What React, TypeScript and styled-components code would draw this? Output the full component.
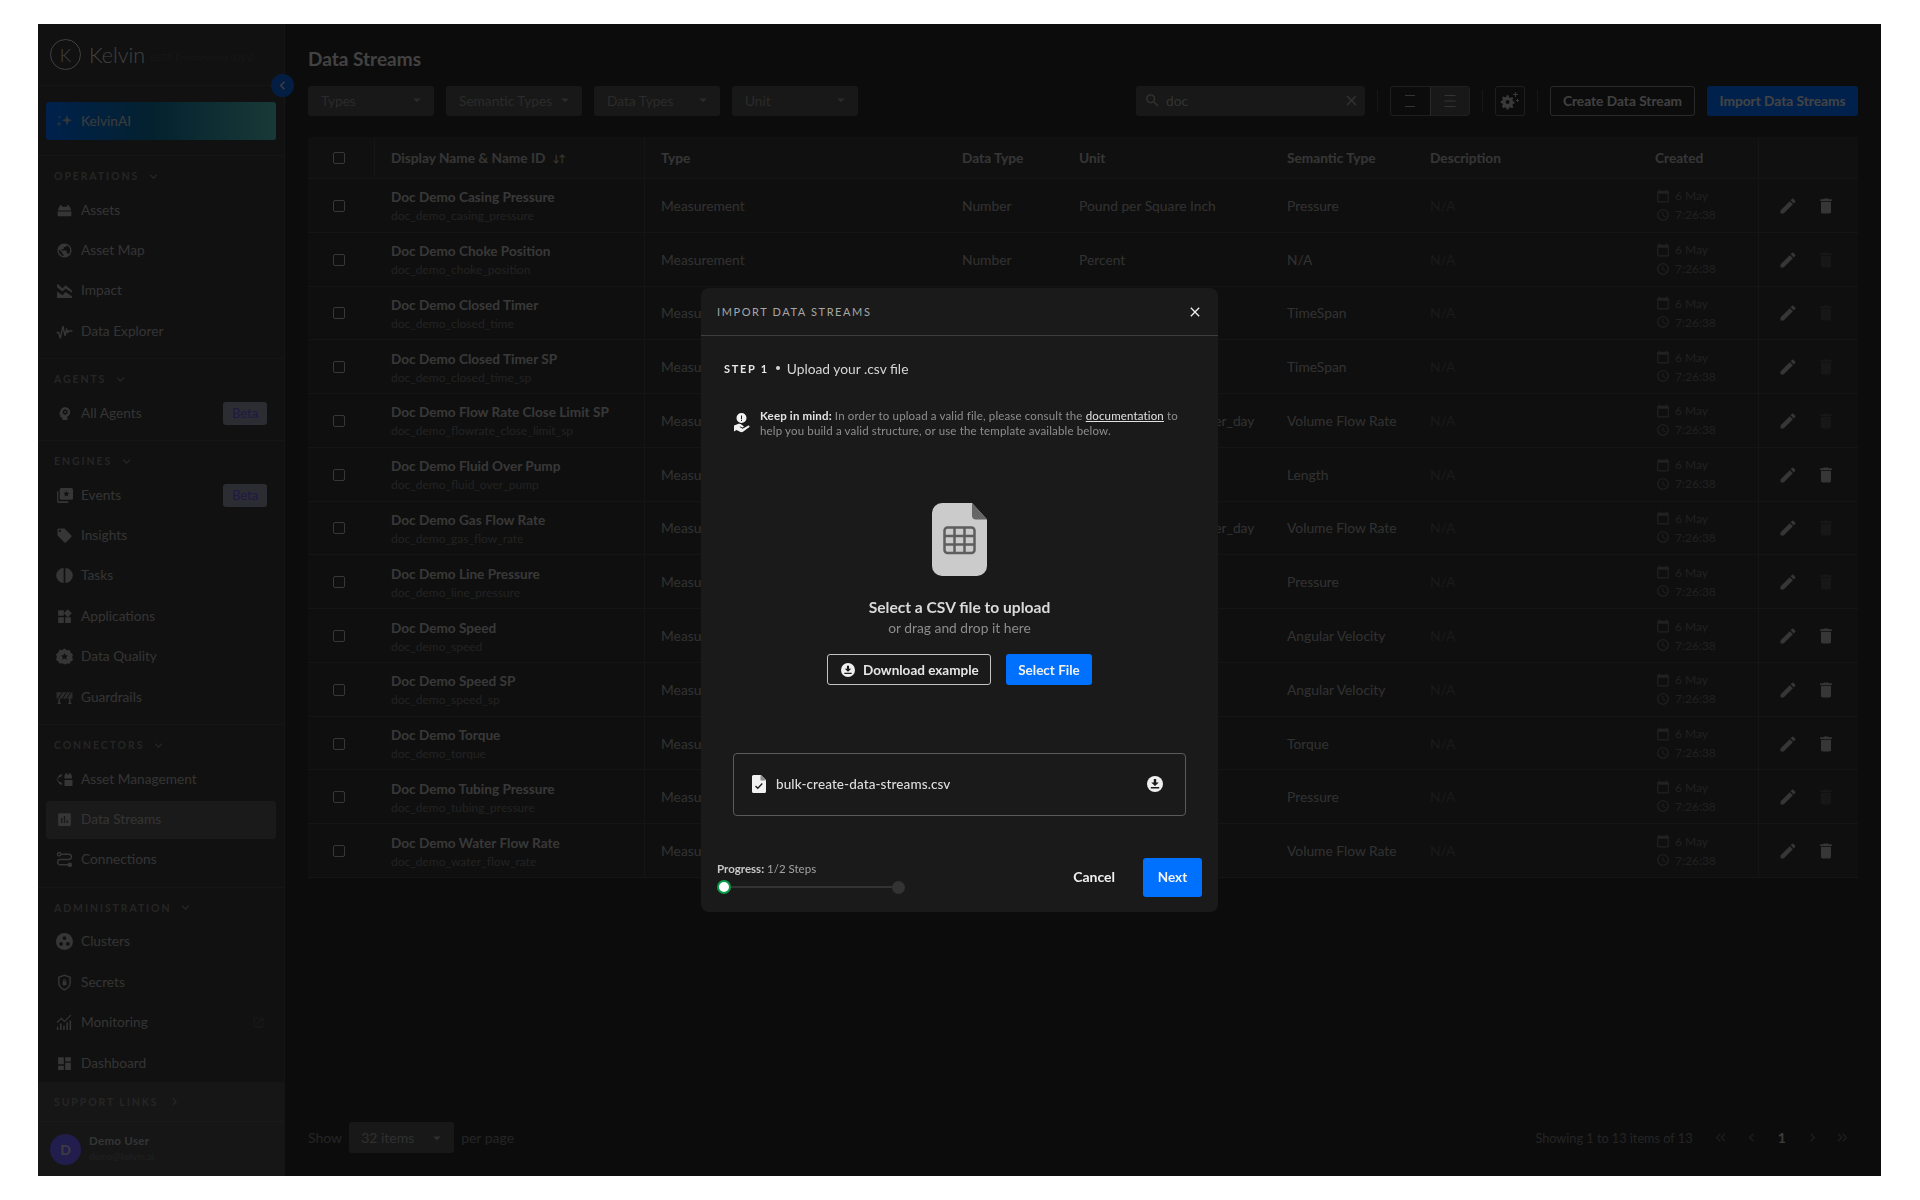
import React from "react";
import styled, { createGlobalStyle } from "styled-components";
import {
  MdAccessTime,
  MdArrowDropDown,
  MdAssessment,
  MdCalendarToday,
  MdChevronLeft,
  MdChevronRight,
  MdClose,
  MdDashboard,
  MdDelete,
  MdEdit,
  MdKeyboardArrowDown,
  MdKeyboardDoubleArrowLeft,
  MdKeyboardDoubleArrowRight,
  MdLocalOffer,
  MdOpenInNew,
  MdPsychology,
  MdPublic,
  MdSearch,
  MdWidgets,
} from "react-icons/md";

const GlobalStyle = createGlobalStyle`
  html, body {
    margin: 0;
    background: #ffffff;
    font-family: "Lato", "Liberation Sans", sans-serif;
  }
  * { box-sizing: border-box; }
`;

const Page = styled.div`
  height: 1200px;
  padding: 24px 39px 24px 38px;
`;

const AppFrame = styled.div`
  position: relative;
  display: flex;
  height: 1152px;
  overflow: hidden;
  background: #2a2a2a;
`;

/* sidebar */
const Sidebar = styled.aside`
  width: 247px;
  flex: none;
  display: flex;
  flex-direction: column;
  background: #393939;
  border-right: 1px solid #4a4a4a;
`;

const Brand = styled.div`
  height: 62px;
  flex: none;
  display: flex;
  align-items: center;
  padding-left: 12px;
  border-bottom: 1px solid #4a4a4a;
`;

const BrandMark = styled.div`
  width: 31px;
  height: 31px;
  border-radius: 50%;
  border: 1px solid #d8d8d8;
  display: flex;
  align-items: center;
  justify-content: center;
  color: #d8d8d8;
  font-size: 18px;
  font-weight: 300;
`;

const BrandName = styled.span`
  margin-left: 8px;
  color: #d8d8d8;
  font-size: 21.5px;
  font-weight: 300;
`;

const BrandEnv = styled.span`
  margin-left: 5px;
  margin-top: 6px;
  color: #4c4c4c;
  font-size: 9.5px;
`;

const AiBlock = styled.div`
  flex: none;
  padding: 16px 8px 15px;
  border-bottom: 1px solid #4a4a4a;
`;

const AiButton = styled.div`
  height: 38px;
  padding: 0 0 2px 10px;
  border-radius: 3px;
  display: flex;
  align-items: center;
  gap: 8px;
  font-size: 13.7px;
  color: #c8c8c8;
  background: linear-gradient(90deg, #0070ff 0%, #0e6f9e 45%, #52c0b8 100%);
`;

const NavScroll = styled.div`
  flex: 1;
  min-height: 0;
  overflow: hidden;
`;

const NavSection = styled.section`
  padding: 11px 8px 8px;
  border-bottom: 1px solid #4a4a4a;
  &:last-child {
    border-bottom: none;
    padding-bottom: 0;
  }
`;

const SectionLabel = styled.div`
  height: 18px;
  margin: 0 0 6px;
  padding-left: 8px;
  display: flex;
  align-items: center;
  gap: 7px;
  font-size: 10.5px;
  font-weight: 700;
  letter-spacing: 1.9px;
  color: #7e7e7e;
  svg {
    font-size: 15px;
  }
`;

const NavLabelText = styled.span`
  flex: 1;
  padding-bottom: 2px;
`;

const NavItem = styled.div<{ $active?: boolean }>`
  height: 38px;
  margin-bottom: 2.4px;
  padding: 0 9px 0 10px;
  display: flex;
  align-items: center;
  gap: 8px;
  border-radius: 3px;
  font-size: 13.7px;
  color: #aeaeae;
  background: ${(p) => (p.$active ? "#575757" : "transparent")};
  &:last-child {
    margin-bottom: 0;
  }
`;

const NavIcon = styled.span`
  width: 17px;
  height: 17px;
  flex: none;
  display: flex;
  align-items: center;
  justify-content: center;
  color: #b4b4b4;
  svg {
    width: 17px;
    height: 17px;
  }
`;

const BetaBadge = styled.span`
  width: 44px;
  height: 23px;
  border-radius: 3px;
  display: flex;
  align-items: center;
  justify-content: center;
  font-size: 13px;
  color: #6a52e0;
  background: #9494ac;
`;

const SideLink = styled.span`
  margin-right: 2px;
  color: #555;
  font-size: 13px;
  display: flex;
`;

const SupportBar = styled.div`
  flex: none;
  height: 40px;
  padding-left: 16px;
  display: flex;
  align-items: center;
  gap: 9px;
  background: #4a4a4a;
  border-bottom: 1px solid #585858;
  font-size: 10.5px;
  font-weight: 700;
  letter-spacing: 1.9px;
  color: #7e7e7e;
  svg {
    font-size: 15px;
  }
`;

const UserBar = styled.div`
  flex: 0 0 54px;
  padding-left: 12px;
  display: flex;
  align-items: center;
  gap: 8px;
  background: #4a4a4a;
`;

const Avatar = styled.div`
  width: 31px;
  height: 31px;
  border-radius: 50%;
  display: flex;
  align-items: center;
  justify-content: center;
  font-size: 14px;
  font-weight: 700;
  color: #c9c9e0;
  background: #7161ff;
`;

const UserName = styled.div`
  font-size: 11.5px;
  font-weight: 700;
  letter-spacing: 0.3px;
  color: #b0b0b0;
  line-height: 16px;
`;

const UserMail = styled.div`
  font-size: 9.5px;
  color: #6e6e6e;
  line-height: 16px;
`;

const CollapseBtn = styled.div`
  position: absolute;
  left: 233px;
  top: 50px;
  width: 23px;
  height: 23px;
  border-radius: 50%;
  display: flex;
  align-items: center;
  justify-content: center;
  color: #d0d0d0;
  font-size: 17px;
  background: #0a66dc;
`;

/* main content */
const Main = styled.main`
  flex: 1;
  min-width: 0;
  display: flex;
  flex-direction: column;
  padding: 23px;
`;

const Title = styled.h1`
  margin: 0;
  height: 24px;
  font-size: 19px;
  line-height: 24px;
  font-weight: 700;
  color: #dcdcdc;
`;

const Toolbar = styled.div`
  margin-top: 15px;
  height: 30px;
  display: flex;
  align-items: stretch;
`;

const FilterGroup = styled.div`
  display: flex;
  gap: 12px;
  flex: 1;
`;

const FilterSelect = styled.div<{ $w: number }>`
  width: ${(p) => p.$w}px;
  padding: 0 8px 2px 13px;
  display: flex;
  align-items: center;
  justify-content: space-between;
  border-radius: 3px;
  font-size: 13.7px;
  color: #8f8f8f;
  background: #505050;
  svg {
    font-size: 18px;
  }
`;

const SearchBox = styled.div`
  width: 229px;
  padding: 0 5px 2px 8px;
  display: flex;
  align-items: center;
  gap: 5px;
  border-radius: 3px;
  font-size: 13.7px;
  color: #a8a8a8;
  background: #505050;
  svg {
    font-size: 17px;
    flex: none;
  }
`;

const SearchText = styled.span`
  flex: 1;
`;

const ToolDivider = styled.div`
  width: 1px;
  margin: 4px 12px;
  background: #4e4e4e;
`;

const ToggleGroup = styled.div`
  display: flex;
  width: 80px;
  border: 1px solid #6a6a6a;
  border-radius: 3px;
  overflow: hidden;
`;

const ToggleButton = styled.div<{ $on?: boolean }>`
  flex: 1;
  display: flex;
  align-items: center;
  justify-content: center;
  color: #b0b0b0;
  background: ${(p) => (p.$on ? "#505050" : "transparent")};
  border-left: ${(p) => (p.$on ? "1px solid #8a8a8a" : "none")};
`;

const GearButton = styled.div`
  width: 30px;
  border: 1px solid #6a6a6a;
  border-radius: 3px;
  display: flex;
  align-items: center;
  justify-content: center;
  color: #c0c0c0;
`;

const OutlineAction = styled.div`
  width: 145px;
  margin-right: 12px;
  padding-bottom: 2px;
  border: 1px solid #8a8a8a;
  border-radius: 3px;
  display: flex;
  align-items: center;
  justify-content: center;
  font-size: 13.7px;
  font-weight: 700;
  color: #d8d8d8;
`;

const PrimaryAction = styled.div`
  width: 151px;
  padding-bottom: 2px;
  border-radius: 3px;
  display: flex;
  align-items: center;
  justify-content: center;
  font-size: 13.7px;
  font-weight: 700;
  color: #e0e0e0;
  background: #0070ff;
`;

/* table */
const columns = "67px 270px 301px 117px 208px 143px 225px 119px 100px";

const Table = styled.div`
  margin-top: 21px;
  background: #333333;
`;

const HeaderRow = styled.div`
  display: grid;
  grid-template-columns: ${columns};
  height: 42px;
  border-bottom: 1px solid #474747;
  background: #383838;
`;

const BodyRow = styled.div`
  display: grid;
  grid-template-columns: ${columns};
  height: 53.77px;
  border-bottom: 1px solid #474747;
`;

const Cell = styled.div<{ $divided?: boolean; $dim?: boolean }>`
  min-width: 0;
  padding-left: 16px;
  display: flex;
  align-items: center;
  font-size: 13.8px;
  white-space: nowrap;
  color: ${(p) => (p.$dim ? "#585858" : "#a6a6a6")};
  border-right: ${(p) => (p.$divided ? "1px solid #474747" : "none")};
`;

const HeadCell = styled(Cell)`
  font-weight: 700;
  font-size: 13.7px;
  color: #b4b4b4;
`;

const CheckCell = styled.div<{ $divided?: boolean }>`
  display: flex;
  align-items: center;
  justify-content: center;
  padding: 1px 5px 0 0;
  border-right: ${(p) => (p.$divided ? "1px solid #474747" : "none")};
`;

const CheckBox = styled.span`
  width: 12px;
  height: 12px;
  border: 1.5px solid #bcbcbc;
  border-radius: 2px;
`;

const NameCell = styled(Cell)`
  flex-direction: column;
  align-items: flex-start;
  justify-content: center;
  gap: 2px;
  padding-top: 2px;
`;

const StreamName = styled.div`
  font-size: 13.6px;
  line-height: 17px;
  font-weight: 700;
  color: #bdbdbd;
`;

const StreamId = styled.div`
  font-size: 12px;
  line-height: 15px;
  color: #747474;
`;

const SortMark = styled.span`
  margin-left: 7px;
  letter-spacing: -1.5px;
  font-size: 10px;
`;

const CreatedCell = styled.div`
  padding-left: 17px;
  display: flex;
  flex-direction: column;
  justify-content: center;
  gap: 4px;
`;

const CreatedLine = styled.div`
  display: flex;
  align-items: center;
  gap: 5px;
  font-size: 12px;
  line-height: 15px;
  color: #6e6e6e;
  svg {
    font-size: 14px;
  }
`;

const ActionCell = styled.div`
  padding: 1px 0 0 19px;
  display: flex;
  align-items: center;
  gap: 18px;
  border-left: 1px solid #474747;
`;

const ActionIcon = styled.span<{ $off?: boolean }>`
  display: flex;
  font-size: 20px;
  color: ${(p) => (p.$off ? "#4e4e4e" : "#b4b4b4")};
`;

/* footer */
const Footer = styled.div`
  margin-top: auto;
  height: 31px;
  display: flex;
  align-items: center;
  justify-content: space-between;
  font-size: 14px;
  color: #7a7a7a;
`;

const PageSize = styled.div`
  display: flex;
  align-items: center;
  gap: 7px;
`;

const SizeSelect = styled.div`
  width: 105px;
  height: 31px;
  padding: 0 8px 0 12px;
  display: flex;
  align-items: center;
  justify-content: space-between;
  border-radius: 3px;
  color: #a0a0a0;
  background: #505050;
  svg {
    font-size: 18px;
  }
`;

const Pager = styled.div`
  display: flex;
  align-items: center;
`;

const PagerInfo = styled.span`
  margin-right: 13px;
  font-size: 12.7px;
`;

const PagerButton = styled.span<{ $current?: boolean }>`
  width: 30.5px;
  display: flex;
  justify-content: center;
  font-size: ${(p) => (p.$current ? "14px" : "17px")};
  font-weight: ${(p) => (p.$current ? 700 : 400)};
  color: ${(p) => (p.$current ? "#c8c8c8" : "#606060")};
`;

/* modal */
const Overlay = styled.div`
  position: absolute;
  inset: 0;
  display: flex;
  align-items: center;
  justify-content: center;
  background: rgba(0, 0, 0, 0.7);
  backdrop-filter: blur(0.6px);
`;

const Modal = styled.div`
  width: 517px;
  height: 624px;
  display: flex;
  flex-direction: column;
  border-radius: 8px;
  background: #1a1a1a;
`;

const ModalHeader = styled.div`
  height: 48px;
  flex: none;
  padding: 0 15px 0 16px;
  display: flex;
  align-items: center;
  justify-content: space-between;
  border-bottom: 1px solid #3e3e3e;
  font-size: 11px;
  letter-spacing: 1.6px;
  color: #a6a6a6;
  svg {
    font-size: 16px;
    color: #ececec;
  }
`;

const ModalBody = styled.div`
  flex: 1;
  display: flex;
  flex-direction: column;
  padding: 0 16px 15px;
`;

const StepLine = styled.div`
  margin-top: 23px;
  padding-left: 7px;
  height: 18px;
  display: flex;
  align-items: center;
  gap: 7px;
  font-size: 13.8px;
  color: #d6d6d6;
`;

const StepTag = styled.span`
  font-size: 11px;
  font-weight: 700;
  letter-spacing: 1.7px;
  color: #e6e6e6;
`;

const StepDot = styled.span`
  width: 4px;
  height: 4px;
  border-radius: 50%;
  background: #d6d6d6;
`;

const Hint = styled.div`
  margin-top: 31px;
  padding-left: 16px;
  display: flex;
  align-items: center;
  gap: 10px;
`;

const HintText = styled.div`
  font-size: 11.5px;
  line-height: 15px;
  letter-spacing: 0.15px;
  color: #8e8e8e;
  b {
    color: #e2e2e2;
    font-weight: 700;
  }
  u {
    color: #e2e2e2;
  }
`;

const DropArea = styled.div`
  margin-top: 65px;
  display: flex;
  flex-direction: column;
  align-items: center;
`;

const DropTitle = styled.div`
  margin-top: 22px;
  font-size: 15.6px;
  line-height: 18px;
  font-weight: 700;
  color: #dadada;
`;

const DropSub = styled.div`
  margin-top: 3px;
  font-size: 13.8px;
  line-height: 18px;
  color: #8c8c8c;
`;

const DropButtons = styled.div`
  margin-top: 17px;
  display: flex;
  gap: 15px;
`;

const OutlineButton = styled.div`
  width: 164px;
  height: 31px;
  padding-left: 13px;
  display: flex;
  align-items: center;
  gap: 8px;
  border: 1px solid #c4c4c4;
  border-radius: 3px;
  font-size: 13.5px;
  font-weight: 700;
  color: #e6e6e6;
`;

const BlueButton = styled.div<{ $w: number; $h: number }>`
  width: ${(p) => p.$w}px;
  height: ${(p) => p.$h}px;
  display: flex;
  align-items: center;
  justify-content: center;
  border-radius: 3px;
  font-size: 13.5px;
  font-weight: 700;
  color: #f2f2f2;
  background: #0070ff;
`;

const NextButton = styled(BlueButton)`
  padding-bottom: 2px;
`;

const FileRow = styled.div`
  margin: 68px 16px 0;
  height: 63px;
  padding: 0 22px 2px 18px;
  display: flex;
  align-items: center;
  gap: 10px;
  border: 1px solid #5a5a5a;
  border-radius: 4px;
  font-size: 13.5px;
  letter-spacing: 0.1px;
  font-weight: 500;
  color: #dedede;
`;

const FileName = styled.span`
  flex: 1;
`;

const ModalFooter = styled.div`
  margin-top: auto;
  display: flex;
  align-items: flex-end;
  justify-content: space-between;
`;

const Progress = styled.div`
  padding-bottom: 3px;
  font-size: 11.5px;
  color: #a2a2a2;
  b {
    color: #c8c8c8;
  }
`;

const Stepper = styled.div`
  margin-top: 5px;
  width: 188px;
  display: flex;
  align-items: center;
`;

const StepCurrent = styled.span`
  width: 14px;
  height: 14px;
  flex: none;
  border-radius: 50%;
  background: #ffffff;
  border: 2px solid #0a9c4a;
`;

const StepTrack = styled.span`
  flex: 1;
  height: 2px;
  background: #333333;
`;

const StepNext = styled.span`
  width: 13px;
  height: 13px;
  flex: none;
  border-radius: 50%;
  background: #333333;
`;

const FooterActions = styled.div`
  display: flex;
  align-items: center;
  gap: 28px;
`;

const CancelText = styled.span`
  padding-bottom: 2px;
  font-size: 14px;
  font-weight: 700;
  color: #f0f0f0;
`;

/* small drawings */
const AssetsIcon = () => (
  <svg viewBox="0 0 16 16" fill="currentColor">
    <path d="M2 6.500 4 3h1.500v1.500h5V3H12l2 3.500V8H2zM1.500 9h13v3.500a1 1 0 0 1-1 1h-11a1 1 0 0 1-1-1z" />
  </svg>
);

const ImpactIcon = () => (
  <svg viewBox="0 0 16 16" fill="currentColor">
    <path d="M1 2h1l4 4 3-3 6 5v2l-6-4-3 3-5-4zM1 9l5 3.500 3-3 6 4V15H1z" />
  </svg>
);

const PulseIcon = () => (
  <svg viewBox="0 0 16 16" fill="none" stroke="currentColor" strokeWidth="1.300">
    <path d="M0.500 9h2l1.500 5.500L6.500 3l2 9 1.500-6 1 3 1-1.500h3.500" />
  </svg>
);

const EventsIcon = () => (
  <svg viewBox="0 0 16 16" fill="currentColor">
    <path d="M1 4h1.200v9.500h9.300V15H2.500A1.500 1.500 0 0 1 1 13.500z" />
    <path
      fillRule="evenodd"
      d="M5 1h9.500A1.500 1.500 0 0 1 16 2.500v8a1.500 1.500 0 0 1-1.500 1.500H5a1.500 1.500 0 0 1-1.500-1.500v-8A1.500 1.500 0 0 1 5 1zm4.700 2.500-.8 1.900-2 .2 1.500 1.300-.4 2 1.700-1 1.700 1-.4-2 1.500-1.300-2-.2z"
    />
  </svg>
);

const TasksIcon = () => (
  <svg viewBox="0 0 16 16" fill="currentColor">
    <path d="M7.200 1v14A7 7 0 0 1 7.200 1zM8.800 1a7 7 0 0 1 0 14z" />
  </svg>
);

const QualityIcon = () => (
  <svg viewBox="0 0 16 16" fill="currentColor">
    <path
      fillRule="evenodd"
      d="m8 .5 2.200 1.600 2.700-.2.900 2.600 2.200 1.600-.8 2.600.8 2.600-2.200 1.600-.9 1.900-2.700-.2L8 15.500l-2.200-1.100-2.700.2-.9-1.900L0 11.100l.8-2.600L0 5.900l2.200-1.600.9-2.600 2.700.2zm0 4.200-1 2.200-2.400.2 1.800 1.600-.5 2.400L8 9.900l2.100 1.200-.5-2.400 1.800-1.600L9 6.900z"
    />
  </svg>
);

const GuardrailIcon = () => (
  <svg viewBox="0 0 16 16" fill="none" stroke="currentColor">
    <rect x="0.500" y="3" width="15" height="6" fill="currentColor" stroke="none" opacity="0.75" />
    <path d="M3 13.500V9M13 13.500V9M1.500 13.500h3M11.500 13.500h3" strokeWidth="1.300" />
    <path d="M2 9l4-6M6 9l4-6M10 9l4-6" stroke="#1a1a1a" strokeWidth="0.800" />
  </svg>
);

const AssetMgmtIcon = () => (
  <svg viewBox="0 0 16 16" fill="currentColor">
    <path d="M5.500 2.500v2.500L3 6 1 8l2 2 2.500 1v2.500L3 12l-2.500-4L3 4zM9 2h1.500v1.500H12V2h1.500L15 4.500V7H8V4.500zM8 8.500h7.500V14H8z" />
  </svg>
);

const ConnectionIcon = () => (
  <svg viewBox="0 0 16 16" fill="none" stroke="currentColor" strokeWidth="1.300">
    <circle cx="3" cy="3" r="1.600" />
    <circle cx="13" cy="13" r="1.600" fill="currentColor" />
    <path d="M4.600 3H12a2.500 2.500 0 0 1 0 5H4a2.500 2.500 0 0 0 0 5h7.400" />
  </svg>
);

const ClustersIcon = () => (
  <svg viewBox="0 0 16 16">
    <circle cx="8" cy="8" r="8" fill="currentColor" />
    <circle cx="8" cy="4.800" r="1.800" fill="#393939" />
    <circle cx="4.800" cy="10.300" r="1.800" fill="#393939" />
    <circle cx="11.200" cy="10.300" r="1.800" fill="#393939" />
  </svg>
);

const ShieldIcon = () => (
  <svg viewBox="0 0 16 16" fill="currentColor">
    <path
      fillRule="evenodd"
      d="M8 .5 14 2.500V8c0 3.500-2.500 6.300-6 7.500C4.500 14.300 2 11.500 2 8V2.500zm0 1.400L3.300 3.500V8c0 2.800 1.900 5 4.700 6.100 2.800-1.100 4.700-3.300 4.700-6.100V3.500z"
    />
    <path d="M6.700 6.300a1.300 1.300 0 0 1 2.600 0V7h.5v3.500H6.200V7h.5zm.8.700h1v-.7a.5.5 0 0 0-1 0z" />
  </svg>
);

const MonitorIcon = () => (
  <svg viewBox="0 0 16 16" fill="none" stroke="currentColor" strokeWidth="1">
    <path d="M1 8l4-4 3 3 6-6" />
    <path d="M1.500 15v-3M4.500 15V9M7.500 15v-4M10.500 15V8M13.500 15V6" strokeWidth="1.400" />
  </svg>
);

const SparkleIcon = () => (
  <svg viewBox="0 0 17 17" fill="currentColor">
    <path d="m11 3 1.300 4 3.700 1.300-3.700 1.300L11 13.500l-1.300-3.900L6 8.300l3.700-1.300zM3 9.500l.6 1.800 1.800.6-1.800.6L3 14.500l-.6-2-1.800-.6 1.800-.6zM3.500 3.500l.4 1.100 1.100.4-1.100.4-.4 1.100-.4-1.100L2 5l1.100-.4z" />
  </svg>
);

const CompactIcon = () => (
  <svg width="14" height="14" viewBox="0 0 14 14" stroke="currentColor" strokeWidth="1.200">
    <path d="M2 1.500h10M2 12.500h10" />
  </svg>
);

const RegularIcon = () => (
  <svg width="14" height="14" viewBox="0 0 14 14" stroke="currentColor" strokeWidth="1.200">
    <path d="M1.500 1.500h11M1.500 7h11M1.500 12.500h11" />
  </svg>
);

const GearSpark = () => (
  <svg width="20" height="20" viewBox="0 0 20 20" fill="currentColor">
    <path d="M9 6.500 10.500 6.900 12 6l1.300 1.300-.9 1.500.4 1.400 1.700.5v1.800l-1.700.5-.4 1.400.9 1.500-1.300 1.300-1.500-.9-1.500.4-.5 1.700H6.700l-.5-1.700-1.400-.4-1.500.9L2 15.300l.9-1.500-.4-1.400L.8 11.900V10.100l1.700-.5.4-1.400L2 6.700 3.300 5.400l1.500.9L6.200 5.900l.5-1.700h1.800zM7.600 9a2 2 0 1 0 0 4 2 2 0 0 0 0-4z" />
    <path d="M15 1h1v2h2v1h-2v2h-1V4h-2V3h2zM17 8h1v1h1v1h-1v1h-1v-1h-1V9h1z" />
  </svg>
);

const HandInfoIcon = () => (
  <svg width="17" height="20" viewBox="0 0 17 20" fill="#f2f2f2">
    <path
      fillRule="evenodd"
      d="M8.500 0a5 5 0 1 1 0 10 5 5 0 0 1 0-10zM8 2.500v3.800h1V2.500zM8 7v1h1V7z"
    />
    <path d="M1 12.500 5 11c1.500-.5 3 .2 4 1l1.500 1a.9.9 0 0 1-1 1.400L7 13.500l-.4.6 3 1.600 5.400-3c1-.4 2 .6 1.400 1.300L10 18.800c-1 .6-2 .5-3 0L3.500 17 1 18.500z" />
  </svg>
);

const CsvFileIcon = () => (
  <svg width="55" height="73" viewBox="0 0 55 73">
    <path
      d="M10 0h30l15 16.500V63a10 10 0 0 1-10 10H10A10 10 0 0 1 0 63V10A10 10 0 0 1 10 0z"
      fill="#cbcbcb"
    />
    <path d="M40 0l15 16.500H44a4 4 0 0 1-4-4z" fill="#666666" />
    <g fill="none" stroke="#5e5e5e" strokeWidth="2.500">
      <rect x="12.500" y="24.500" width="30" height="25.500" rx="3" />
      <path d="M12.500 33h30M12.500 41.500h30M22.500 24.500V50M32.500 24.500V50" />
    </g>
  </svg>
);

const DownloadCircle = ({ size, ink }: { size: number; ink: string }) => (
  <svg width={size} height={size} viewBox="0 0 16 16">
    <circle cx="8" cy="8" r="8" fill="#f0f0f0" />
    <path d="M6.800 3h2.400v3.500h2.600L8 10 4.200 6.500h2.600zM3.800 11h8.400v1.600H3.800z" fill={ink} />
  </svg>
);

const FileCheckIcon = () => (
  <svg width="14" height="18" viewBox="0 0 14 18">
    <path d="M1.500 0H9l5 5v11.500a1.500 1.500 0 0 1-1.500 1.500h-11A1.500 1.500 0 0 1 0 16.500v-15A1.500 1.500 0 0 1 1.500 0z" fill="#f2f2f2" />
    <path d="M8.500 0 14 5.500H8.500z" fill="#8a8a8a" />
    <path d="m3.500 11 2.300 2.300 4.500-4.800" fill="none" stroke="#1a1a1a" strokeWidth="1.300" />
  </svg>
);

type NavEntry = { label: string; icon: React.ReactNode; beta?: boolean; active?: boolean; external?: boolean };

const navSections: { title: string; items: NavEntry[] }[] = [
  {
    title: "OPERATIONS",
    items: [
      { label: "Assets", icon: <AssetsIcon /> },
      { label: "Asset Map", icon: <MdPublic /> },
      { label: "Impact", icon: <ImpactIcon /> },
      { label: "Data Explorer", icon: <PulseIcon /> },
    ],
  },
  { title: "AGENTS", items: [{ label: "All Agents", icon: <MdPsychology />, beta: true }] },
  {
    title: "ENGINES",
    items: [
      { label: "Events", icon: <EventsIcon />, beta: true },
      { label: "Insights", icon: <MdLocalOffer /> },
      { label: "Tasks", icon: <TasksIcon /> },
      { label: "Applications", icon: <MdWidgets /> },
      { label: "Data Quality", icon: <QualityIcon /> },
      { label: "Guardrails", icon: <GuardrailIcon /> },
    ],
  },
  {
    title: "CONNECTORS",
    items: [
      { label: "Asset Management", icon: <AssetMgmtIcon /> },
      { label: "Data Streams", icon: <MdAssessment />, active: true },
      { label: "Connections", icon: <ConnectionIcon /> },
    ],
  },
  {
    title: "ADMINISTRATION",
    items: [
      { label: "Clusters", icon: <ClustersIcon /> },
      { label: "Secrets", icon: <ShieldIcon /> },
      { label: "Monitoring", icon: <MonitorIcon />, external: true },
      { label: "Dashboard", icon: <MdDashboard /> },
    ],
  },
];

type Stream = { name: string; id: string; unit: string; semantic: string; canDelete: boolean };

const streams: Stream[] = [
  { name: "Doc Demo Casing Pressure", id: "doc_demo_casing_pressure", unit: "Pound per Square Inch", semantic: "Pressure", canDelete: true },
  { name: "Doc Demo Choke Position", id: "doc_demo_choke_position", unit: "Percent", semantic: "N/A", canDelete: false },
  { name: "Doc Demo Closed Timer", id: "doc_demo_closed_time", unit: "Second", semantic: "TimeSpan", canDelete: false },
  { name: "Doc Demo Closed Timer SP", id: "doc_demo_closed_time_sp", unit: "Second", semantic: "TimeSpan", canDelete: false },
  { name: "Doc Demo Flow Rate Close Limit SP", id: "doc_demo_flowrate_close_limit_sp", unit: "standard_cubic_feet_per_day", semantic: "Volume Flow Rate", canDelete: false },
  { name: "Doc Demo Fluid Over Pump", id: "doc_demo_fluid_over_pump", unit: "Foot", semantic: "Length", canDelete: true },
  { name: "Doc Demo Gas Flow Rate", id: "doc_demo_gas_flow_rate", unit: "standard_cubic_feet_per_day", semantic: "Volume Flow Rate", canDelete: false },
  { name: "Doc Demo Line Pressure", id: "doc_demo_line_pressure", unit: "Pound per Square Inch", semantic: "Pressure", canDelete: false },
  { name: "Doc Demo Speed", id: "doc_demo_speed", unit: "Hertz", semantic: "Angular Velocity", canDelete: true },
  { name: "Doc Demo Speed SP", id: "doc_demo_speed_sp", unit: "Hertz", semantic: "Angular Velocity", canDelete: true },
  { name: "Doc Demo Torque", id: "doc_demo_torque", unit: "Newton Meter", semantic: "Torque", canDelete: true },
  { name: "Doc Demo Tubing Pressure", id: "doc_demo_tubing_pressure", unit: "Pound per Square Inch", semantic: "Pressure", canDelete: false },
  { name: "Doc Demo Water Flow Rate", id: "doc_demo_water_flow_rate", unit: "Barrel per Day", semantic: "Volume Flow Rate", canDelete: true },
];

export default function App() {
  return (
    <Page>
      <GlobalStyle />
      <AppFrame>
        <Sidebar>
          <Brand>
            <BrandMark>K</BrandMark>
            <BrandName>Kelvin</BrandName>
            <BrandEnv>BETA Environment (DEV)</BrandEnv>
          </Brand>
          <AiBlock>
            <AiButton>
              <NavIcon>
                <SparkleIcon />
              </NavIcon>
              KelvinAI
            </AiButton>
          </AiBlock>
          <NavScroll>
            {navSections.map((section) => (
              <NavSection key={section.title}>
                <SectionLabel>
                  {section.title}
                  <MdKeyboardArrowDown />
                </SectionLabel>
                {section.items.map((item) => (
                  <NavItem key={item.label} $active={item.active}>
                    <NavIcon>{item.icon}</NavIcon>
                    <NavLabelText>{item.label}</NavLabelText>
                    {item.beta && <BetaBadge>Beta</BetaBadge>}
                    {item.external && (
                      <SideLink>
                        <MdOpenInNew />
                      </SideLink>
                    )}
                  </NavItem>
                ))}
              </NavSection>
            ))}
          </NavScroll>
          <SupportBar>
            SUPPORT LINKS
            <MdChevronRight />
          </SupportBar>
          <UserBar>
            <Avatar>D</Avatar>
            <div>
              <UserName>Demo User</UserName>
              <UserMail>demo@kelvin.ai</UserMail>
            </div>
          </UserBar>
        </Sidebar>
        <CollapseBtn>
          <MdChevronLeft />
        </CollapseBtn>

        <Main>
          <Title>Data Streams</Title>
          <Toolbar>
            <FilterGroup>
              <FilterSelect $w={126}>
                Types
                <MdArrowDropDown />
              </FilterSelect>
              <FilterSelect $w={136}>
                Semantic Types
                <MdArrowDropDown />
              </FilterSelect>
              <FilterSelect $w={126}>
                Data Types
                <MdArrowDropDown />
              </FilterSelect>
              <FilterSelect $w={126}>
                Unit
                <MdArrowDropDown />
              </FilterSelect>
            </FilterGroup>
            <SearchBox>
              <MdSearch />
              <SearchText>doc</SearchText>
              <MdClose />
            </SearchBox>
            <ToolDivider />
            <ToggleGroup>
              <ToggleButton>
                <CompactIcon />
              </ToggleButton>
              <ToggleButton $on>
                <RegularIcon />
              </ToggleButton>
            </ToggleGroup>
            <ToolDivider />
            <GearButton>
              <GearSpark />
            </GearButton>
            <ToolDivider />
            <OutlineAction>Create Data Stream</OutlineAction>
            <PrimaryAction>Import Data Streams</PrimaryAction>
          </Toolbar>

          <Table>
            <HeaderRow>
              <CheckCell $divided>
                <CheckBox />
              </CheckCell>
              <HeadCell $divided>
                Display Name &amp; Name ID
                <SortMark>↓↑</SortMark>
              </HeadCell>
              <HeadCell>Type</HeadCell>
              <HeadCell>Data Type</HeadCell>
              <HeadCell>Unit</HeadCell>
              <HeadCell>Semantic Type</HeadCell>
              <HeadCell>Description</HeadCell>
              <HeadCell>Created</HeadCell>
              <ActionCell />
            </HeaderRow>
            {streams.map((row) => (
              <BodyRow key={row.id}>
                <CheckCell>
                  <CheckBox />
                </CheckCell>
                <NameCell $divided>
                  <StreamName>{row.name}</StreamName>
                  <StreamId>{row.id}</StreamId>
                </NameCell>
                <Cell>Measurement</Cell>
                <Cell>Number</Cell>
                <Cell>{row.unit}</Cell>
                <Cell>{row.semantic}</Cell>
                <Cell $dim>N/A</Cell>
                <CreatedCell>
                  <CreatedLine>
                    <MdCalendarToday />6 May
                  </CreatedLine>
                  <CreatedLine>
                    <MdAccessTime />
                    7:26:38
                  </CreatedLine>
                </CreatedCell>
                <ActionCell>
                  <ActionIcon>
                    <MdEdit />
                  </ActionIcon>
                  <ActionIcon $off={!row.canDelete}>
                    <MdDelete />
                  </ActionIcon>
                </ActionCell>
              </BodyRow>
            ))}
          </Table>

          <Footer>
            <PageSize>
              Show
              <SizeSelect>
                32 items
                <MdArrowDropDown />
              </SizeSelect>
              per page
            </PageSize>
            <Pager>
              <PagerInfo>Showing 1 to 13 items of 13</PagerInfo>
              <PagerButton>
                <MdKeyboardDoubleArrowLeft />
              </PagerButton>
              <PagerButton>
                <MdChevronLeft />
              </PagerButton>
              <PagerButton $current>1</PagerButton>
              <PagerButton>
                <MdChevronRight />
              </PagerButton>
              <PagerButton>
                <MdKeyboardDoubleArrowRight />
              </PagerButton>
            </Pager>
          </Footer>
        </Main>

        <Overlay>
          <Modal>
            <ModalHeader>
              IMPORT DATA STREAMS
              <MdClose />
            </ModalHeader>
            <ModalBody>
              <StepLine>
                <StepTag>STEP 1</StepTag>
                <StepDot />
                Upload your .csv file
              </StepLine>
              <Hint>
                <HandInfoIcon />
                <HintText>
                  <b>Keep in mind:</b> In order to upload a valid file, please consult the <u>documentation</u> to
                  <br />
                  help you build a valid structure, or use the template available below.
                </HintText>
              </Hint>
              <DropArea>
                <CsvFileIcon />
                <DropTitle>Select a CSV file to upload</DropTitle>
                <DropSub>or drag and drop it here</DropSub>
                <DropButtons>
                  <OutlineButton>
                    <DownloadCircle size={14} ink="#1a1a1a" />
                    Download example
                  </OutlineButton>
                  <BlueButton $w={86} $h={31}>
                    Select File
                  </BlueButton>
                </DropButtons>
              </DropArea>
              <FileRow>
                <FileCheckIcon />
                <FileName>bulk-create-data-streams.csv</FileName>
                <DownloadCircle size={16} ink="#1a1a1a" />
              </FileRow>
              <ModalFooter>
                <Progress>
                  <b>Progress:</b> 1/2 Steps
                  <Stepper>
                    <StepCurrent />
                    <StepTrack />
                    <StepNext />
                  </Stepper>
                </Progress>
                <FooterActions>
                  <CancelText>Cancel</CancelText>
                  <NextButton $w={59} $h={39}>
                    Next
                  </NextButton>
                </FooterActions>
              </ModalFooter>
            </ModalBody>
          </Modal>
        </Overlay>
      </AppFrame>
    </Page>
  );
}
